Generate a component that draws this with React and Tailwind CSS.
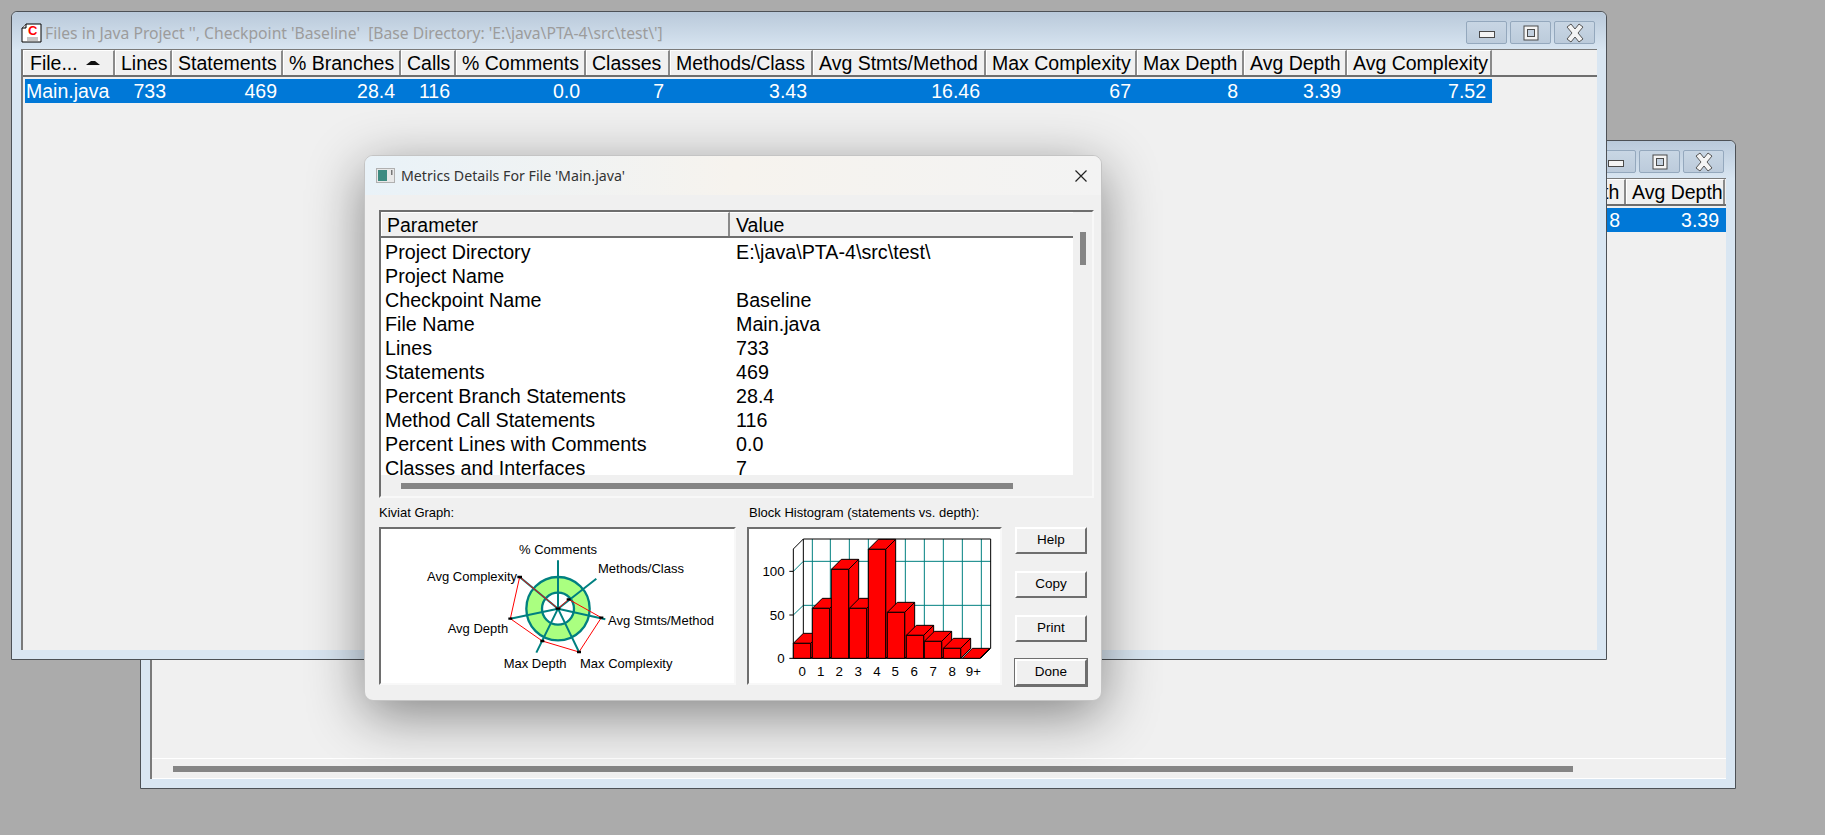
import React from 'react';

const columns = [
  { name: 'File...', width: 92, value: 'Main.java', sort: true },
  { name: 'Lines', width: 57, value: '733' },
  { name: 'Statements', width: 111, value: '469' },
  { name: '% Branches', width: 118, value: '28.4' },
  { name: 'Calls', width: 55, value: '116' },
  { name: '% Comments', width: 130, value: '0.0' },
  { name: 'Classes', width: 84, value: '7' },
  { name: 'Methods/Class', width: 143, value: '3.43' },
  { name: 'Avg Stmts/Method', width: 173, value: '16.46' },
  { name: 'Max Complexity', width: 151, value: '67' },
  { name: 'Max Depth', width: 107, value: '8' },
  { name: 'Avg Depth', width: 103, value: '3.39' },
  { name: 'Avg Complexity', width: 145, value: '7.52' },
];

const details = [
  ['Project Directory', 'E:\\java\\PTA-4\\src\\test\\'],
  ['Project Name', ''],
  ['Checkpoint Name', 'Baseline'],
  ['File Name', 'Main.java'],
  ['Lines', '733'],
  ['Statements', '469'],
  ['Percent Branch Statements', '28.4'],
  ['Method Call Statements', '116'],
  ['Percent Lines with Comments', '0.0'],
  ['Classes and Interfaces', '7'],
];

const bars = [
  [70, 343], [127, 238], [184, 121], [238, 238], [295, 61],
  [352, 250], [409, 319], [463, 337], [520, 358], [577, 388],
];

const xLabels = [[97, '0'], [152, '1'], [208, '2'], [265, '3'], [321, '4'], [376, '5'], [433, '6'], [490, '7'], [547, '8'], [610, '9+']];

const sans = "font-['Liberation_Sans',Arial,sans-serif]";

const WinButton = ({ kind }) => (
  <div className="flex h-[23px] w-[41px] items-center justify-center rounded-[2px] border border-[#94a8bd] bg-gradient-to-b from-[#c8d6e4] to-[#bccbdb]">
    <svg width="20" height="20" viewBox="0 0 20 20">
      {kind === 'min' && <rect x="2.5" y="8.5" width="15" height="6" fill="#f4f4f4" stroke="#4a4a4a" />}
      {kind === 'max' && (
        <g fill="none">
          <rect x="3" y="3" width="14" height="14" fill="#f4f4f4" stroke="#4a4a4a" />
          <rect x="6.5" y="6.5" width="7" height="7" fill="#c3d1e0" stroke="#4a4a4a" />
        </g>
      )}
      {kind === 'close' && (
        <path d="M2 4 L6 1 L10 6 L14 1 L18 4 L13 10 L18 16 L14 19 L10 14 L6 19 L2 16 L7 10 Z" fill="#f4f4f4" stroke="#555" strokeWidth="1" />
      )}
    </svg>
  </div>
);

const HeaderCell = ({ col, width }) => (
  <div
    style={{ width: width || col.width }}
    className="flex h-full shrink-0 items-center justify-between whitespace-nowrap border-l border-t border-white border-r-2 border-r-[#8a8a8a] bg-[#f0f0f0] px-[5px] pt-[2px] text-[19.5px] text-black"
  >
    <span className={col.sort ? 'pl-[1px]' : ''}>{col.name}</span>
    {col.sort && (
      <svg width="16" height="8" viewBox="0 0 16 8" className="mr-[7px]">
        <path d="M1 5 L6 1 L10 1 L15 5 Z" fill="#111" />
        <path d="M1 7 H15" stroke="#fff" strokeWidth="1" />
      </svg>
    )}
  </div>
);

const ValueCell = ({ col, width }) => (
  <div
    style={{ width: width || (col.sort ? col.width - 2 : col.width) }}
    className={`shrink-0 whitespace-nowrap text-[19.5px] leading-[24px] text-white ${col.sort ? 'pl-[1px] text-left' : 'pr-[6px] text-right'}`}
  >
    {col.value}
  </div>
);

const WindowFrame = ({ className, title, children, icon }) => (
  <div className={`absolute flex flex-col rounded-t-[6px] border border-[#4d5156] bg-[#d9e6f2] ${className}`}>
    <div className="flex h-[37px] shrink-0 items-center justify-between rounded-t-[6px] bg-gradient-to-b from-[#b9c9da] to-[#d8e5f1] pl-[9px] pr-[11px]">
      <div className="flex min-w-0 items-center gap-[3px] pt-[6px]">
        {icon}
        <span className="whitespace-pre font-['Noto_Sans',sans-serif] text-[15.7px] text-[#9c9c9c]">{title}</span>
      </div>
      <div className="flex gap-[3px] pt-[4px]">
        <WinButton kind="min" />
        <WinButton kind="max" />
        <WinButton kind="close" />
      </div>
    </div>
    {children}
  </div>
);

const AppIcon = () => (
  <svg width="21" height="20" viewBox="0 0 21 20" className="shrink-0">
    <path d="M5 1 H20 V19 H1 V5 Z" fill="#fff" stroke="#000" />
    <path d="M5 1 V5 H1" fill="#ddd" stroke="#000" />
    <text x="7" y="12" fontSize="13" fontWeight="bold" fill="#f00" fontFamily="Liberation Sans">C</text>
    <path d="M6 15 H17 M6 17 H17" stroke="#888" />
  </svg>
);

const Kiviat = () => (
  <svg width="353" height="154" viewBox="34 89 1059 462" className="block">
    <circle cx="565" cy="328" r="95" fill="#aaff80" stroke="#008080" strokeWidth="7" />
    <circle cx="565" cy="328" r="48" fill="#fff" stroke="#008080" strokeWidth="7" />
    <path
      d="M565 328 L565 183 M565 328 L680 238 M565 328 L707 360 M565 328 L628 458 M565 328 L500 460 M565 328 L422 358 M565 328 L450 233"
      stroke="#008080"
      strokeWidth="6"
      fill="none"
    />
    <path d="M450 233 L565 328 L597 300 L695 355 L628 458 L518 425 L422 358 Z" fill="none" stroke="#f00" strokeWidth="3" />
    <path d="M443 233 H457 M558 328 H572 M591 300 H603 M689 355 H701 M622 458 H634 M512 425 H524 M416 358 H428" stroke="#000" strokeWidth="7" />
    <g fontSize="39" fontFamily="Liberation Sans" fill="#000">
      <text x="448" y="165">% Comments</text>
      <text x="685" y="222">Methods/Class</text>
      <text x="172" y="246">Avg Complexity</text>
      <text x="715" y="378">Avg Stmts/Method</text>
      <text x="234" y="402">Avg Depth</text>
      <text x="402" y="507">Max Depth</text>
      <text x="631" y="507">Max Complexity</text>
    </g>
  </svg>
);

const Histogram = () => (
  <svg width="251" height="154" viewBox="-63 0 753 462" className="block">
    {[127, 181, 238, 295, 350, 406, 463, 520, 577, 634].map((x) => (
      <path key={x} d={`M${x} 30 V358`} stroke="#008080" strokeWidth="3" />
    ))}
    <path d="M100 97 H662 M100 229 H662 M70 127 L100 97 M70 258 L100 229" stroke="#008080" strokeWidth="3" fill="none" />
    <path d="M70 388 V60 L100 30 H662 V358 L632 388 M100 30 V358" stroke="#000" strokeWidth="3" fill="none" />
    <path d="M58 127 H70 M58 258 H70 M58 388 H632" stroke="#000" strokeWidth="3" />
    {bars.map(([x, top]) => (
      <g key={x} fill="#f00" stroke="#000" strokeWidth="3" strokeLinejoin="round">
        <path d={`M${x + 52} ${top} L${x + 82} ${top - 30} V358 L${x + 52} 388 Z`} />
        <path d={`M${x} ${top} L${x + 30} ${top - 30} H${x + 82} L${x + 52} ${top} Z`} />
        <rect x={x} y={top} width="52" height={388 - top} />
      </g>
    ))}
    <g fontSize="40" fontFamily="Liberation Sans" fill="#000">
      <text x="44" y="141" textAnchor="end">100</text>
      <text x="44" y="272" textAnchor="end">50</text>
      <text x="44" y="403" textAnchor="end">0</text>
      {xLabels.map(([x, t]) => (
        <text key={t} x={x} y="442" textAnchor="middle">{t}</text>
      ))}
    </g>
  </svg>
);

const DialogButton = ({ label, primary }) => (
  <button
    className={`h-[27px] w-[72px] border-2 border-t-white border-l-white border-r-[#6e6e6e] border-b-[#6e6e6e] bg-[#f0f0f0] text-[13.5px] text-black ${primary ? 'outline outline-1 outline-[#6e6e6e]' : ''}`}
  >
    {label}
  </button>
);

const sunken = 'border-2 border-t-[#6e6e6e] border-l-[#6e6e6e] border-r-[#f8f8f8] border-b-[#f8f8f8] bg-white';

const MetricsDialog = () => (
  <div className={`absolute left-[364px] top-[155px] flex h-[546px] w-[738px] flex-col overflow-hidden rounded-[9px] border border-[#c4c4c4] bg-[#f0f0f0] shadow-[0_14px_55px_rgba(0,0,0,0.45)] ${sans}`}>
    <div className="flex h-[39px] shrink-0 items-center justify-between bg-gradient-to-r from-[#e9f2f8] via-[#f6f3ee] to-[#f3f3f3] pl-[11px] pr-[13px]">
      <div className="flex items-center gap-[6px]">
        <svg width="19" height="15" viewBox="0 0 19 15">
          <rect x="0.5" y="0.5" width="18" height="14" fill="#e8e8e8" stroke="#b0b0b0" />
          <rect x="2" y="2" width="9" height="11" fill="#3d8a80" />
          <rect x="15" y="2" width="1.5" height="5" fill="#777" />
        </svg>
        <span className="font-['Noto_Sans',sans-serif] text-[14.2px] text-[#333]">Metrics Details For File 'Main.java'</span>
      </div>
      <svg width="14" height="14" viewBox="0 0 14 14">
        <path d="M1.5 1.5 L12.5 12.5 M12.5 1.5 L1.5 12.5" stroke="#222" strokeWidth="1.2" />
      </svg>
    </div>

    <div className="ml-[14px] mr-[7px] mt-[15px] flex h-[288px] shrink-0 flex-col border-2 border-t-[#6e6e6e] border-l-[#6e6e6e] border-r-[#f8f8f8] border-b-[#f8f8f8]">
      <div className="flex min-h-0 flex-1">
        <div className="flex w-[692px] flex-col bg-white">
          <div className="mb-[2px] flex h-[26px] shrink-0 border-b-2 border-[#6e6e6e] bg-[#f0f0f0] text-[19.5px] text-black">
            <div className="w-[349px] border-l border-t border-white border-r-2 border-r-[#8a8a8a] pl-[5px] leading-[24px]">Parameter</div>
            <div className="flex-1 border-t border-white pl-[6px] leading-[24px]">Value</div>
          </div>
          {details.map(([name, value]) => (
            <div key={name} className="flex h-[24px] shrink-0 text-[19.7px] leading-[24px] text-black">
              <div className="w-[355px] whitespace-nowrap pl-[4px]">{name}</div>
              <div className="whitespace-nowrap">{value}</div>
            </div>
          ))}
        </div>
        <div className="flex flex-1 flex-col items-center pt-[20px]">
          <div className="h-[33px] w-[6px] bg-[#858585]" />
        </div>
      </div>
      <div className="flex h-[21px] shrink-0 items-center pl-[20px]">
        <div className="h-[6px] w-[612px] bg-[#858585]" />
      </div>
    </div>

    <div className="mt-[6px] flex pl-[14px]">
      <div className="w-[368px]">
        <div className="h-[23px] text-[13px] leading-[18px] text-black">Kiviat Graph:</div>
        <div className={`h-[158px] w-[357px] ${sunken}`}>
          <Kiviat />
        </div>
      </div>
      <div className="w-[268px]">
        <div className="h-[23px] pl-[2px] text-[13px] leading-[18px] text-black">Block Histogram (statements vs. depth):</div>
        <div className={`h-[158px] w-[255px] ${sunken}`}>
          <Histogram />
        </div>
      </div>
      <div className="flex flex-col gap-[17px] pt-[23px]">
        <DialogButton label="Help" />
        <DialogButton label="Copy" />
        <DialogButton label="Print" />
        <DialogButton label="Done" primary />
      </div>
    </div>
  </div>
);

export default function App() {
  return (
    <div className={`relative h-[835px] w-[1825px] overflow-hidden bg-[#ababab] ${sans}`}>
      {/* back window, mostly covered */}
      <WindowFrame className="left-[140px] top-[140px] h-[649px] w-[1596px]" title="">
        <div className="mx-[9px] mb-[9px] flex min-h-0 flex-1 flex-col border-l-2 border-t border-[#7a7a7a] bg-[#f0f0f0]">
          <div className="flex h-[27px] shrink-0 justify-end border-b-2 border-[#6e6e6e] pr-[1px]">
            <HeaderCell col={columns[10]} />
            <HeaderCell col={columns[11]} width={99} />
          </div>
          <div className="mt-[2px] flex h-[24px] shrink-0 justify-end bg-[#0078d7] pr-[1px]">
            <ValueCell col={columns[10]} />
            <ValueCell col={columns[11]} width={99} />
          </div>
          <div className="flex-1" />
          <div className="flex h-[21px] items-center border-y border-white pl-[21px]">
            <div className="h-[6px] w-[1400px] bg-[#858585]" />
          </div>
        </div>
      </WindowFrame>

      {/* front window */}
      <WindowFrame
        className="left-[11px] top-[11px] h-[649px] w-[1596px]"
        icon={<AppIcon />}
        title="Files in Java Project '', Checkpoint 'Baseline'  [Base Directory: 'E:\java\PTA-4\src\test\']"
      >
        <div className="mx-[9px] mb-[9px] flex min-h-0 flex-1 flex-col border-l-2 border-t border-[#7a7a7a] bg-[#f0f0f0]">
          <div className="flex h-[27px] shrink-0 border-b-2 border-[#6e6e6e]">
            {columns.map((col) => (
              <HeaderCell key={col.name} col={col} />
            ))}
          </div>
          <div className="ml-[2px] mt-[2px] flex h-[24px] w-fit shrink-0 bg-[#0078d7]">
            {columns.map((col) => (
              <ValueCell key={col.name} col={col} />
            ))}
          </div>
        </div>
      </WindowFrame>

      <MetricsDialog />
    </div>
  );
}
